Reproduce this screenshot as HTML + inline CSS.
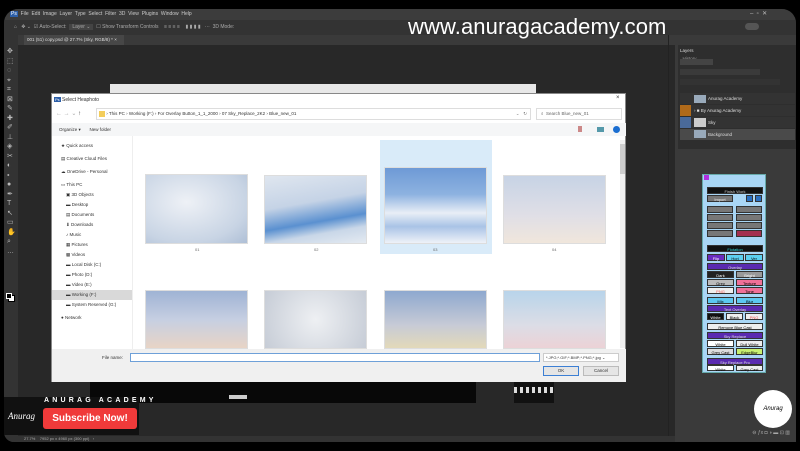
<!DOCTYPE html>
<html><head><style>
*{margin:0;padding:0;box-sizing:border-box}
body{width:800px;height:451px;background:#000;position:relative;overflow:hidden;font-family:"Liberation Sans",sans-serif;font-size:5px;color:#ccc}
.a{position:absolute}
.scr{left:4px;top:9px;width:792px;height:433px;background:#282828;border-radius:14px 14px 0 10px;overflow:hidden}
.th{position:absolute;border:1px solid #ddd}
.pb{position:absolute;height:7px;font-size:4px;text-align:center;line-height:7px;border:1px solid #333}
</style></head><body>
<div class="a scr">
 <div class="a" style="left:0;top:0;width:792px;height:11px;background:#3c3c3c;color:#ccc;font-size:5px;line-height:11px;padding-left:6px">
  <span style="background:#2d5fa8;color:#fff;padding:0 1px">Ps</span>&nbsp; File &nbsp;Edit &nbsp;Image &nbsp;Layer &nbsp;Type &nbsp;Select &nbsp;Filter &nbsp;3D &nbsp;View &nbsp;Plugins &nbsp;Window &nbsp;Help</div>
 <div class="a" style="left:0;top:11px;width:792px;height:15px;background:#333;color:#aaa;font-size:5px;line-height:15px;padding-left:10px">⌂ &nbsp; ✥ ⌄ &nbsp;☑ Auto-Select: &nbsp;<span style="background:#444;padding:0 3px">Layer ⌄</span> &nbsp;☐ Show Transform Controls &nbsp;&nbsp; ≡ ≡ ≡ ≡ &nbsp;&nbsp; ▮ ▮ ▮ ▮ &nbsp; ··· &nbsp;3D Mode:</div>
 <div class="a" style="left:14px;top:26px;width:660px;height:10px;background:#3a3a3a"></div>
 <div class="a" style="left:20px;top:26px;width:100px;height:10px;background:#474747;font-size:4.5px;line-height:10px;padding-left:3px;color:#ddd">001 (51) copy.psd @ 27.7% (Sky, RGB/8) * ×</div>
 <div class="a" style="left:0;top:26px;width:14px;height:410px;background:#333"></div>
 <div class="a" style="left:3px;top:38px;width:8px;height:270px;color:#bbb;font-size:7px;line-height:9.5px">✥<br>⬚<br>◌<br>⌖<br>⌗<br>⊠<br>✎<br>✚<br>✐<br>⊥<br>◈<br>✂<br>◐<br>⬩<br>●<br>✒<br>T<br>↖<br>▭<br>✋<br>⌕<br>…</div>
 <div class="a" style="left:4px;top:286px;width:7px;height:7px;background:#fff;border:1px solid #000"></div>
 <div class="a" style="left:2px;top:284px;width:6px;height:6px;background:#000;border:1px solid #fff"></div>
 <div class="a" style="left:106px;top:75px;width:426px;height:10px;background:#e8e8e8"></div>
 <div class="a" style="left:86px;top:372px;width:386px;height:22px;background:#080808"></div>
 <div class="a" style="left:510px;top:372px;width:40px;height:22px;background:#111"></div>
 <div class="a" style="left:510px;top:378px;width:40px;height:6px;background:repeating-linear-gradient(90deg,#ddd 0 3px,#111 3px 6px)"></div>
 <div class="a" style="left:225px;top:386px;width:18px;height:4px;background:#ccc"></div>
 <div class="a" style="left:671px;top:26px;width:121px;height:410px;background:#3a3a3a"></div>
 <div class="a" style="left:674px;top:36px;width:118px;height:104px;background:#2e2e2e"></div>
 <div class="a" style="left:676px;top:38px;width:30px;height:8px;font-size:4.5px;color:#ddd;line-height:8px">Layers &nbsp;&nbsp;<span style="color:#999">History</span></div>
 <div class="a" style="left:676px;top:50px;width:33px;height:6px;background:#444"></div>
 <div class="a" style="left:676px;top:60px;width:80px;height:6px;background:#3a3a3a"></div>
 <div class="a" style="left:676px;top:70px;width:100px;height:6px;background:#333"></div>
 <div class="a" style="left:676px;top:84px;width:115px;height:11px;background:#333;font-size:4.5px;line-height:11px;padding-left:28px;color:#ddd">Anurag Academy</div>
 <div class="a" style="left:676px;top:96px;width:115px;height:11px;background:#333;font-size:4.5px;line-height:11px;padding-left:14px;color:#ddd">› ■ By Anurag Academy</div>
 <div class="a" style="left:676px;top:96px;width:11px;height:11px;background:#b06a1a"></div>
 <div class="a" style="left:676px;top:108px;width:115px;height:11px;background:#333;font-size:4.5px;line-height:11px;padding-left:28px;color:#ddd">Sky</div>
 <div class="a" style="left:676px;top:108px;width:11px;height:11px;background:#4a6a9a"></div>
 <div class="a" style="left:690px;top:109px;width:12px;height:9px;background:#ccc"></div>
 <div class="a" style="left:676px;top:120px;width:115px;height:11px;background:#4a4a4a;font-size:4.5px;line-height:11px;padding-left:28px;color:#ddd">Background</div>
 <div class="a" style="left:690px;top:86px;width:12px;height:8px;background:#9ab"></div>
 <div class="a" style="left:690px;top:121px;width:12px;height:8px;background:#9ab"></div>
 <div class="a" style="left:671px;top:421px;width:121px;height:8px;color:#aaa;font-size:5px;text-align:right;padding-right:6px">⊖ ƒx ◘ ◑ ▬ ⊡ ▥</div>
 <div class="a" style="left:750px;top:381px;width:38px;height:38px;background:#fff;border-radius:50%;color:#000;font-size:6px;font-style:italic;text-align:center;line-height:38px">Anurag</div>
 <div class="a" style="left:664px;top:26px;width:1px;height:410px;background:#222"></div>
 <div class="a" style="left:404px;top:5px;font-size:22px;color:#fff;letter-spacing:0.1px">www.anuragacademy.com</div>
 <div class="a" style="left:746px;top:1px;color:#bbb;font-size:6px">–&nbsp;&nbsp;▫&nbsp;&nbsp;✕</div>
 <div class="a" style="left:741px;top:14px;width:14px;height:7px;background:#555;border-radius:4px"></div>
 <div class="a" style="left:0;top:427px;width:671px;height:6px;background:#333;font-size:4px;color:#aaa;padding-left:20px">27.7% &nbsp;&nbsp; 7952 px x 4960 px (300 ppi) &nbsp;&nbsp;›</div>
</div>
<div class="a" style="left:51px;top:93px;width:575px;height:289px;background:#fff;border:1px solid #888">
 <div class="a" style="left:2px;top:2px;font-size:5px;color:#333;line-height:8px"><span style="background:#2d5fa8;color:#fff;font-size:4px;padding:0 1px">Ps</span> Select Heaphoto</div>
 <div class="a" style="left:564px;top:1px;font-size:6px;color:#333">×</div>
 <div class="a" style="left:4px;top:16px;font-size:6px;color:#aaa">← → ⌄ <span style="color:#444">↑</span></div>
 <div class="a" style="left:44px;top:14px;width:435px;height:12px;border:1px solid #ddd;font-size:4.5px;line-height:10px;color:#333;padding-left:2px"><span style="display:inline-block;width:6px;height:6px;background:#f3cd5b;vertical-align:middle"></span> › This PC › Working (F:) › For Overlay Button_1_1_2000 › 07 Sky_Replace_2K2 › Blue_new_01<span style="float:right;color:#777;padding-right:3px">⌄ &nbsp; ↻</span></div>
 <div class="a" style="left:484px;top:14px;width:86px;height:12px;border:1px solid #ddd;font-size:4.5px;line-height:10px;color:#666;padding-left:4px">⌕ &nbsp;Search Blue_new_01</div>
 <div class="a" style="left:0;top:29px;width:574px;height:13px;background:#f5f6f7;font-size:4.5px;line-height:13px;color:#333;padding-left:7px">Organize ▾ &nbsp;&nbsp;&nbsp;&nbsp;&nbsp; New folder</div>
 <div class="a" style="left:526px;top:32px;width:4px;height:6px;background:#c88"></div>
 <div class="a" style="left:545px;top:33px;width:7px;height:5px;background:#59a"></div>
 <div class="a" style="left:561px;top:32px;width:7px;height:7px;background:#1b6ed1;border-radius:50%"></div>
 <div class="a" style="left:0;top:42px;width:81px;height:213px;border-right:1px solid #eee;font-size:4.5px;color:#333;line-height:10px;padding-top:5px">
  <div style="padding-left:9px">★ Quick access</div>
  <div style="padding-left:9px;margin-top:3px">▤ Creative Cloud Files</div>
  <div style="padding-left:9px;margin-top:3px">☁ OneDrive - Personal</div>
  <div style="padding-left:9px;margin-top:3px">▭ This PC</div>
  <div style="padding-left:14px">▣ 3D Objects</div>
  <div style="padding-left:14px">▬ Desktop</div>
  <div style="padding-left:14px">▤ Documents</div>
  <div style="padding-left:14px">⬇ Downloads</div>
  <div style="padding-left:14px">♪ Music</div>
  <div style="padding-left:14px">▦ Pictures</div>
  <div style="padding-left:14px">▩ Videos</div>
  <div style="padding-left:14px">▬ Local Disk (C:)</div>
  <div style="padding-left:14px">▬ Photo (D:)</div>
  <div style="padding-left:14px">▬ Video (E:)</div>
  <div style="padding-left:14px;background:#d9d9d9">▬ Working (F:)</div>
  <div style="padding-left:14px">▬ System Reserved (G:)</div>
  <div style="padding-left:9px;margin-top:3px">● Network</div>
 </div>
 <div class="a" style="left:328px;top:46px;width:112px;height:114px;background:#d9ebf9"></div>
 <div class="th" style="left:93px;top:80px;width:103px;height:70px;background:radial-gradient(ellipse at 40% 40%,#eef1f6,#c8d4e4 70%,#aebfd6)"></div>
 <div class="th" style="left:212px;top:81px;width:103px;height:69px;background:linear-gradient(170deg,#dfe6ef 0%,#c5d3e6 40%,#5a90d0 65%,#c9d7e8 80%,#e4eaf1)"></div>
 <div class="th" style="left:332px;top:73px;width:103px;height:77px;background:linear-gradient(180deg,#6e9ad6 0%,#8db2e0 35%,#e8eef6 60%,#a9c3e6 78%,#eef2f8 100%)"></div>
 <div class="th" style="left:451px;top:81px;width:103px;height:69px;background:linear-gradient(180deg,#c7d3e5,#e0dfe6 60%,#f0e6dc)"></div>
 <div class="a" style="left:143px;top:153px;font-size:4px;color:#666">01</div>
 <div class="a" style="left:262px;top:153px;font-size:4px;color:#666">02</div>
 <div class="a" style="left:381px;top:153px;font-size:4px;color:#666">03</div>
 <div class="a" style="left:500px;top:153px;font-size:4px;color:#666">04</div>
 <div class="th" style="left:93px;top:196px;width:103px;height:59px;background:linear-gradient(180deg,#9fb3d4,#c6cfe2 50%,#e8d4c6)"></div>
 <div class="th" style="left:212px;top:196px;width:103px;height:59px;background:radial-gradient(circle,#eef0f3,#c6ccd6)"></div>
 <div class="th" style="left:332px;top:196px;width:103px;height:59px;background:linear-gradient(180deg,#8ea8cf,#c7cbd6 60%,#e3d9b9)"></div>
 <div class="th" style="left:451px;top:196px;width:103px;height:59px;background:linear-gradient(180deg,#b8d4ea,#dcdde6 60%,#ecd2d6)"></div>
 <div class="a" style="left:568px;top:46px;width:5px;height:208px;background:#f0f0f0"></div>
 <div class="a" style="left:568px;top:50px;width:5px;height:30px;background:#cdcdcd"></div>
 <div class="a" style="left:0;top:255px;width:574px;height:33px;background:#f0f0f0"></div>
 <div class="a" style="left:50px;top:261px;font-size:4.5px;color:#333">File name:</div>
 <div class="a" style="left:78px;top:259px;width:410px;height:9px;background:#fff;border:1px solid #6ea0d8"></div>
 <div class="a" style="left:491px;top:259px;width:76px;height:9px;background:#fff;border:1px solid #ccc;font-size:4px;line-height:7px;padding-left:2px;color:#333">*.JPG;*.GIF;*.BMP;*.PNG;*.jpg ⌄</div>
 <div class="a" style="left:491px;top:272px;width:36px;height:10px;background:#e5e5e5;border:1px solid #3c7fd4;font-size:4.5px;line-height:8px;text-align:center;color:#333">OK</div>
 <div class="a" style="left:531px;top:272px;width:36px;height:10px;background:#e5e5e5;border:1px solid #bbb;font-size:4.5px;line-height:8px;text-align:center;color:#333">Cancel</div>
</div>
<div class="a" style="left:702px;top:174px;width:64px;height:199px;background:#a9d6f5;border:1px solid #6aa">
 <div class="a" style="left:1px;top:0;width:5px;height:5px;background:#b030e0"></div>
 <div class="pb" style="left:4px;top:12px;width:56px;background:#111;color:#ccc">Finish Work</div>
 <div class="pb" style="left:4px;top:20px;width:26px;background:#777;color:#eee">Import</div>
 <div class="pb" style="left:43px;top:20px;width:7px;background:#2a6fc0"></div>
 <div class="pb" style="left:52px;top:20px;width:7px;background:#2a6fc0"></div>
 <div class="pb" style="left:4px;top:31px;width:26px;background:#777"></div><div class="pb" style="left:33px;top:31px;width:26px;background:#777"></div>
 <div class="pb" style="left:4px;top:39px;width:26px;background:#777"></div><div class="pb" style="left:33px;top:39px;width:26px;background:#777"></div>
 <div class="pb" style="left:4px;top:47px;width:26px;background:#777"></div><div class="pb" style="left:33px;top:47px;width:26px;background:#777"></div>
 <div class="pb" style="left:4px;top:55px;width:26px;background:#777"></div><div class="pb" style="left:33px;top:55px;width:26px;background:#a33050"></div>
 <div class="pb" style="left:4px;top:70px;width:56px;background:#111;color:#3dd">Flotation</div>
 <div class="pb" style="left:4px;top:79px;width:18px;background:#6a2cc0;color:#fff">Flip</div><div class="pb" style="left:23px;top:79px;width:18px;background:#5cd0f0;color:#000">Hori</div><div class="pb" style="left:42px;top:79px;width:18px;background:#5cd0f0;color:#000">Ver</div>
 <div class="pb" style="left:4px;top:88px;width:56px;background:#5a2ab0;color:#ddd">Overlay</div>
 <div class="pb" style="left:4px;top:96px;width:27px;background:#222;color:#fff">Dark</div><div class="pb" style="left:33px;top:96px;width:27px;background:#999;color:#fff">Bright</div>
 <div class="pb" style="left:4px;top:104px;width:27px;background:#bbb;color:#000">Grey</div><div class="pb" style="left:33px;top:104px;width:27px;background:#f07098;color:#000">Texture</div>
 <div class="pb" style="left:4px;top:112px;width:27px;background:#eee;color:#e55">PNG</div><div class="pb" style="left:33px;top:112px;width:27px;background:#f07098;color:#000">Tone</div>
 <div class="pb" style="left:4px;top:122px;width:27px;background:#5cc8f0;color:#000">Mix</div><div class="pb" style="left:33px;top:122px;width:27px;background:#5cc8f0;color:#000">Blur</div>
 <div class="pb" style="left:4px;top:130px;width:56px;background:#5a2ab0;color:#ddd">Text Overlay</div>
 <div class="pb" style="left:4px;top:138px;width:17px;background:#111;color:#fff">White</div><div class="pb" style="left:23px;top:138px;width:17px;background:#eee;color:#000">Black</div><div class="pb" style="left:42px;top:138px;width:18px;background:#eee;color:#e55">PNG</div>
 <div class="pb" style="left:4px;top:148px;width:56px;background:#eee;color:#000">Remove Blue Cast</div>
 <div class="pb" style="left:4px;top:157px;width:56px;background:#5a2ab0;color:#ddd">Sky Replace</div>
 <div class="pb" style="left:4px;top:165px;width:27px;background:#fff;color:#000">White</div><div class="pb" style="left:33px;top:165px;width:27px;background:#eee;color:#000">Dull White</div>
 <div class="pb" style="left:4px;top:173px;width:27px;background:#ddd;color:#000">Grey Cast</div><div class="pb" style="left:33px;top:173px;width:27px;background:#c8f070;color:#000">EdgeBlur</div>
 <div class="pb" style="left:4px;top:183px;width:56px;background:#5a2ab0;color:#ddd">Sky Replace Pro</div>
 <div class="pb" style="left:4px;top:190px;width:27px;background:#fff;color:#000;height:6px">White</div><div class="pb" style="left:33px;top:190px;width:27px;background:#eee;color:#000;height:6px">Grey Cast</div>
</div>
<div class="a" style="left:4px;top:397px;width:135px;height:38px;background:#111"></div>
<div class="a" style="left:8px;top:400px;width:33px;height:32px;color:#fff;font-style:italic;font-size:9px;line-height:32px;font-family:'Liberation Serif',serif">Anurag</div>
<div class="a" style="left:44px;top:397px;font-size:7px;color:#fff;letter-spacing:3.2px;font-weight:bold">ANURAG ACADEMY</div>
<div class="a" style="left:43px;top:408px;width:94px;height:21px;background:#f03a3a;border-radius:3px;color:#fff;font-weight:bold;font-size:10px;text-align:center;line-height:21px">Subscribe Now!</div>
</body></html>
